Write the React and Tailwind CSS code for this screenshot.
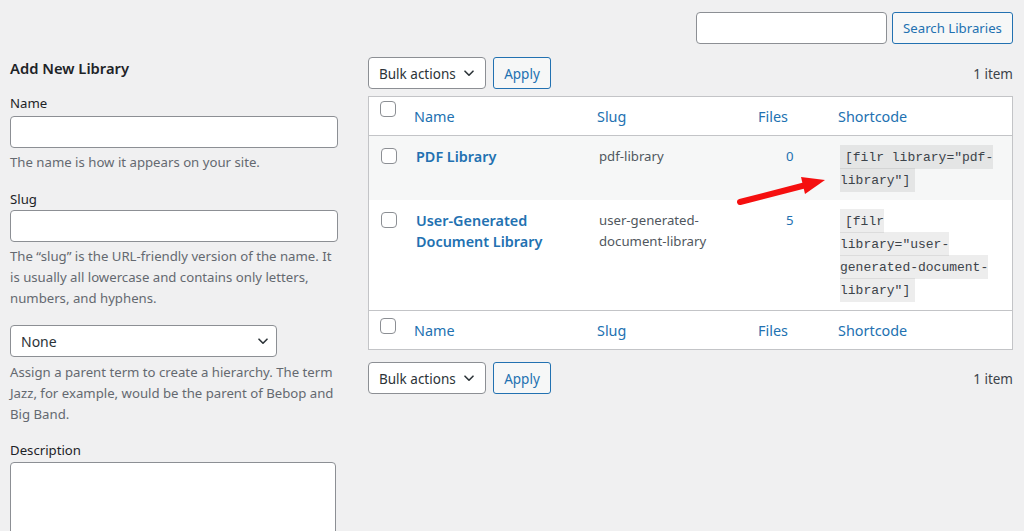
import React from "react";

function Chevron({ className = "" }) {
  return (
    <svg className={className} width="10" height="7" viewBox="0 0 10 7" fill="none">
      <path d="M1 1.2 L5 5.2 L9 1.2" stroke="#2c3338" strokeWidth="1.6" strokeLinecap="round" strokeLinejoin="round" />
    </svg>
  );
}

function Checkbox({ className = "" }) {
  return (
    <span className={"block w-[16px] h-[16px] rounded-[4px] border border-[#8c8f94] bg-white " + className} />
  );
}

function TableNav({ className = "" }) {
  return (
    <div className={"flex items-center h-[32px] " + className}>
      <div className="flex items-center justify-between w-[118px] h-[32px] rounded-[4px] border border-[#8c8f94] bg-white pl-[10px] pr-[11px] text-[13.5px] text-[#2c3338]">
        <span className="pt-[2px]">Bulk actions</span>
        <Chevron />
      </div>
      <button className="ml-[7px] w-[58px] h-[32px] rounded-[3px] border border-[#2271b1] bg-[#f6f7f7] text-[13.5px] text-[#2271b1] pt-[2px]">
        Apply
      </button>
      <span className="ml-auto text-[13.5px] text-[#3c434a] pt-[2px]">1 item</span>
    </div>
  );
}

const cols = "grid grid-cols-[36px_183px_161px_80px_1fr]";

function HeadRow({ footer }) {
  const th = "flex items-center pl-[9px] pt-[2px] text-[14.4px] text-[#2271b1]";
  return (
    <div className={cols + " h-[39px] " + (footer ? "border-t border-[#c3c4c7]" : "border-b border-[#c3c4c7]")}>
      <div className={footer ? "pl-[11px] pt-[7px]" : "pl-[11px] pt-[4px]"}>
        <Checkbox />
      </div>
      <div className={th}>Name</div>
      <div className={th}>Slug</div>
      <div className={th}>Files</div>
      <div className={th}>Shortcode</div>
    </div>
  );
}

function BodyRow({ title, slug, count, code, striped, className = "" }) {
  return (
    <div className={cols + " pt-[9px] pb-[9px] " + (striped ? "bg-[#f6f7f7] " : "bg-white ") + className}>
      <div className="pl-[12px] h-[21px] flex items-center">
        <Checkbox />
      </div>
      <div className="pl-[11px] pr-[10px] pt-[1px] text-[14.4px] leading-[21px] font-semibold text-[#2271b1]">{title}</div>
      <div className="pl-[11px] pr-[10px] pt-[1px] text-[13.2px] leading-[21px] text-[#50575e]">{slug}</div>
      <div className="pl-[37px] pt-[1px] text-[13.2px] leading-[21px] text-[#2271b1]">{count}</div>
      <div className="pl-[11px] pr-[16px] font-['Liberation_Mono',monospace] text-[13px] leading-[23px]">
        <code className="font-['Liberation_Mono',monospace] text-[13px] leading-[23px] text-[#3c434a] bg-[rgba(0,0,0,0.07)] px-[5px] py-[4.5px]">
          {code}
        </code>
      </div>
    </div>
  );
}

export default function App() {
  const help = "text-[13.2px] leading-[21px] text-[#646970] whitespace-nowrap pt-[1px]";
  const label = "text-[13.2px] leading-[21px] text-[#1d2327] pt-[1px]";
  return (
    <div className="relative w-[1024px] h-[531px] overflow-hidden bg-[#f0f0f1] font-['Noto_Sans',sans-serif]">
      <div className="flex justify-end gap-[5px] pt-[12px] pr-[11px]">
        <input className="w-[191px] h-[32px] rounded-[4px] border border-[#8c8f94] bg-white" />
        <button className="w-[121px] h-[32px] rounded-[3px] border border-[#2271b1] bg-[#f6f7f7] text-[13.2px] text-[#2271b1] pt-[1px]">
          Search Libraries
        </button>
      </div>

      <div className="flex gap-[30px] pl-[10px] pr-[11px] mt-[13px]">
        <div className="w-[328px] shrink-0 flex flex-col">
          <h2 className="text-[14.75px] leading-[20px] font-semibold text-[#1d2327] pt-[1px]">Add New Library</h2>

          <div className={label + " mt-[14px]"}>Name</div>
          <div className="mt-[2px] h-[32px] w-[328px] rounded-[4px] border border-[#8c8f94] bg-white" />
          <p className={help + " mt-[3px]"}>The name is how it appears on your site.</p>

          <div className={label + " mt-[15px]"}>Slug</div>
          <div className="h-[32px] w-[328px] rounded-[4px] border border-[#8c8f94] bg-white" />
          <p className={help + " mt-[3px]"}>
            The “slug” is the URL-friendly version of the name. It
            <br />
            is usually all lowercase and contains only letters,
            <br />
            numbers, and hyphens.
          </p>

          <div className="mt-[16px] flex items-center justify-between w-[267px] h-[32px] rounded-[4px] border border-[#8c8f94] bg-white pl-[10px] pr-[8px] text-[14px] text-[#2c3338]">
            <span className="pt-[1px]">None</span>
            <Chevron />
          </div>
          <p className={help + " mt-[4px]"}>
            Assign a parent term to create a hierarchy. The term
            <br />
            Jazz, for example, would be the parent of Bebop and
            <br />
            Big Band.
          </p>

          <div className={label + " mt-[14px]"}>Description</div>
          <div className="mt-[1px] h-[110px] w-[326px] rounded-[4px] border border-[#8c8f94] bg-white" />
        </div>

        <div className="flex-1 flex flex-col">
          <TableNav />
          <div className="mt-[7px] border border-[#c3c4c7] bg-white">
            <HeadRow />
            <BodyRow
              title="PDF Library"
              slug="pdf-library"
              count="0"
              code={'[filr library="pdf-library"]'}
              striped
            />
            <BodyRow
              title="User-Generated Document Library"
              slug="user-generated-document-library"
              count="5"
              code={'[filr library="user-generated-document-library"]'}
            />
            <HeadRow footer />
          </div>
          <TableNav className="mt-[12px]" />
        </div>
      </div>

      <svg className="absolute left-0 top-0 pointer-events-none" width="1024" height="531" viewBox="0 0 1024 531">
        <line x1="740" y1="202" x2="806" y2="185" stroke="#f50f0f" strokeWidth="6" strokeLinecap="round" />
        <polygon points="825,180 801,177 805,194" fill="#f50f0f" />
      </svg>
    </div>
  );
}
